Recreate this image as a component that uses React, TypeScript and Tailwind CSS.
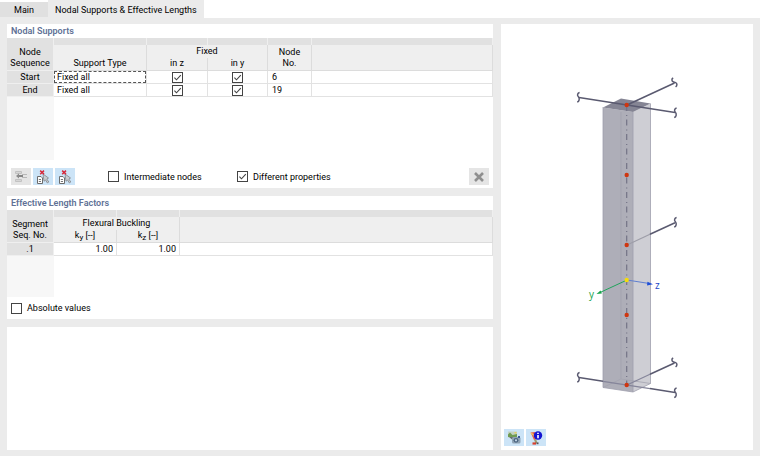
import { useState } from "react";
import type { ReactNode } from "react";

interface SupportRow {
  id: string;
  sequence: string;
  type: string;
  fixedZ: boolean;
  fixedY: boolean;
  node: number;
}

const SUPPORTS: SupportRow[] = [
  { id: "start", sequence: "Start", type: "Fixed all", fixedZ: true, fixedY: true, node: 6 },
  { id: "end", sequence: "End", type: "Fixed all", fixedZ: true, fixedY: true, node: 19 },
];

const MEMBER_NODES = [105, 175, 245, 315, 385];

const strip = "h-[7px] border-r border-[#efefef] bg-[#e1e1e1] p-0";
const head =
  "border-r border-b border-[#dcdcdc] bg-[#efefef] p-0 pb-px align-bottom font-normal leading-[11px]";
const rowHead =
  "border-r border-b border-[#efefef] bg-[#e1e1e1] p-0 font-normal leading-[11px]";
const cell = "border-r border-b border-[#e2e2e2] p-0";

function Checkbox({
  label,
  hideLabel,
  defaultChecked = false,
}: {
  label: string;
  hideLabel?: boolean;
  defaultChecked?: boolean;
}) {
  const [checked, setChecked] = useState(defaultChecked);

  return (
    <label className="inline-flex items-center gap-[5px] align-middle">
      <span className="grid">
        <input
          type="checkbox"
          aria-label={hideLabel ? label : undefined}
          checked={checked}
          onChange={(e) => setChecked(e.target.checked)}
          className="col-start-1 row-start-1 h-[11px] w-[11px] appearance-none border border-[#444] bg-white"
        />
        {checked ? (
          <svg
            viewBox="0 0 11 11"
            className="pointer-events-none col-start-1 row-start-1 h-[11px] w-[11px]"
          >
            <path d="M2.4 5.6 4.5 7.8 8.8 3.2" fill="none" stroke="#444" strokeWidth="1.1" />
          </svg>
        ) : null}
      </span>
      {hideLabel ? null : label}
    </label>
  );
}

function ToolButton({
  label,
  disabled,
  children,
}: {
  label: string;
  disabled?: boolean;
  children: ReactNode;
}) {
  return (
    <button
      type="button"
      aria-label={label}
      disabled={disabled}
      className={`flex h-[17px] w-5 items-center justify-center ${disabled ? "bg-[#e5e5e5]" : "bg-[#cce4f7]"}`}
    >
      {children}
    </button>
  );
}

function InsertRowIcon() {
  return (
    <svg viewBox="0 0 14 13" className="h-[13px] w-3.5" fill="none">
      <path d="M1.5 1.5h6v2h-6zM1.5 9.5h6v2h-6z" fill="#d6d6d6" stroke="#c2c2c2" />
      <path d="M8 4.5h5M8 7.5h5" stroke="#b8b8b8" />
      <path d="M3 6h6" stroke="#858585" strokeWidth="2" />
      <path d="M5 3.500 2 6l3 2.500z" fill="#8c8c8c" />
    </svg>
  );
}

function PickNodeIcon() {
  return (
    <svg viewBox="0 0 14 14" className="h-3.5 w-3.5" fill="none">
      <path d="M1.5 6.5H5L6.5 8v5.5h-5z" fill="#fff" stroke="#6c6c6c" />
      <path d="M2.8 9.5h2.2M2.8 11.5h2.2" stroke="#777" />
      <path d="M7 4 12.5 8 10.8 9 12.8 12 11.3 12.9 9.6 10 8 11.2z" fill="#c9ced2" stroke="#8a8f94" strokeWidth=".9" />
      <path d="M4.2.6 8 4.2M8 .6 4.2 4.2" stroke="#d6283a" strokeWidth="1.5" />
    </svg>
  );
}

function CloseIcon() {
  return (
    <svg viewBox="0 0 12 12" className="h-3 w-3" fill="none">
      <path d="M2 2l8 8M10 2 2 10" stroke="#8f8f8f" strokeWidth="2.6" />
    </svg>
  );
}

function SaveViewIcon() {
  return (
    <svg viewBox="0 0 14 13" className="h-[13px] w-3.5">
      <path d="M1 .5h9v6H1z" fill="#c3d3c4" />
      <path d="M1 3.5 3 1.5 5.500 4 10 3v3H1z" fill="#6f9a52" />
      <path d="M7.500 1h2v1.500h-2z" fill="#e8cf5c" />
      <path d="M2 6h6l-1 2.500H5z" fill="#666c70" />
      <rect x="5" y="6" width="8.500" height="6.500" rx="1.500" fill="#8fa3b5" />
      <path d="M11 5h2v2h-2z" fill="#3d5c94" />
      <circle cx="9" cy="9.300" r="2.400" fill="#4b6580" />
      <circle cx="9" cy="9.300" r="1.100" fill="#c4d8e8" />
    </svg>
  );
}

function MemberInfoIcon() {
  return (
    <svg viewBox="0 0 14 14" className="h-3.5 w-3.5">
      <path d="M1.500 1.500 6 1 7.500 8 5 9z" fill="#e4604c" />
      <path d="M2 2 6 5.500" stroke="#f3c060" strokeWidth="1.6" />
      <path d="M6 8.500 7.500 12" stroke="#9a9b70" strokeWidth="2" />
      <path d="M3.500 12.500h3.500" stroke="#d8402c" strokeWidth="2.2" />
      <path d="M7.500 12.300h2" stroke="#555" strokeWidth="1.8" />
      <circle cx="9" cy="4.500" r="4.200" fill="#1414d2" />
      <path d="M9 3.900v3.400M9 1.700v1.400" stroke="#fff" strokeWidth="1.6" />
    </svg>
  );
}

// Break symbol at the far end of a connected member
function Break({ x, y, tilted }: { x: number; y: number; tilted?: boolean }) {
  return (
    <path
      transform={`translate(${x} ${y})`}
      d={
        tilted
          ? "M-.8-5C-2.6-4.2-2.6-1.7-.4-1L1.6-.4C3.3.3 3.4 2.8 1.6 4"
          : "M1.6-5C-.4-4.6-1.2-2.2.4-.7 1.8.8 1.4 4-.8 4.5"
      }
    />
  );
}

function MemberView() {
  return (
    <svg
      viewBox="0 0 252 402"
      className="min-h-0 w-full flex-1"
      role="img"
      aria-label="Member preview"
    >
      <g transform="translate(-501 -24)" fill="none">
        <path d="M603 107.5 633 112V392l-30-4.5z" fill="#aeaeb8" />
        <path d="M633 112 650.5 103.5V383.5L633 392z" fill="#ceced4" />
        <path d="M621 112V379" stroke="#a3a3af" />
        <path d="M603 387.5 621 379 650.5 383.5" stroke="#a3a3b0" strokeWidth=".8" />
        <path d="M603 107V387.5L633 392V112M633 392l17.5-8.5V103.5" stroke="#a0a0ad" strokeWidth=".8" />
        <path d="M603 107.5 621 98.5 650.5 103.5 633 112z" fill="#858594" />
        <path
          d="M626.7 105V385"
          stroke="#737386"
          strokeWidth="1.2"
          strokeDasharray="6 4 1 3.5"
        />

        <g stroke="#5a5a70" strokeWidth="1.5">
          <path d="M579 97.5 675 112.5M627 105l47.5-22" />
          <path d="M627 245 650 234.3" stroke="#9d9da8" strokeWidth="1.2" />
          <path d="M650 234.3 675 222.8" />
          <path d="M579 377.5 603 381.3M650 388.6 675 392.5M650 374.3 674.5 363" />
          <path d="M603 381.3 650 388.6M627 385 650 374.3" stroke="#85859a" strokeWidth="1.2" />
          <Break x={578} y={97.5} />
          <Break x={674} y={83} tilted />
          <Break x={675} y={113} />
          <Break x={675} y={222.5} />
          <Break x={578} y={377.5} />
          <Break x={674} y={363} tilted />
          <Break x={675} y={393} />
        </g>

        <path d="M627 280 600 292.5" stroke="#21a35c" />
        <path d="M596.5 294l4-3.5 1.4 3z" fill="#16a34a" />
        <path d="M627 280 648 283.3" stroke="#5f7fd0" />
        <path d="M653 284.3l-5.5-2.5-.5 3.6z" fill="#1d4ed8" />
        <text x="589" y="298" fontSize="10" fill="#16a34a" className="font-['Open_Sans']">y</text>
        <text x="655" y="289" fontSize="10" fill="#1d48c8" className="font-['Open_Sans']">z</text>

        {MEMBER_NODES.map((y) => (
          <circle key={y} cx="626.7" cy={y} r="2.2" fill="#cf3610" />
        ))}
        <circle cx="626.7" cy="280" r="2.2" fill="#f5dc0a" />
      </g>
    </svg>
  );
}

function PanelTitle({ children }: { children: ReactNode }) {
  return (
    <h2 className="px-1 text-[9px] leading-[14px] font-semibold text-[#607196]">{children}</h2>
  );
}

function NodalSupports() {
  return (
    <section className="bg-white pb-[3px]">
      <PanelTitle>Nodal Supports</PanelTitle>
      <table className="w-full table-fixed border-separate border-spacing-0 text-center leading-[11px]">
        <colgroup>
          <col className="w-[47px]" />
          <col className="w-[93px]" />
          <col className="w-[61px]" />
          <col className="w-[60px]" />
          <col className="w-11" />
          <col />
        </colgroup>
        <thead>
          <tr>
            <td className={strip} />
            <td className={strip} />
            <td className={strip} />
            <td className={strip} />
            <td className={strip} />
            <td className={strip} />
          </tr>
          <tr className="h-[13px]">
            <th rowSpan={2} className={`${rowHead} pb-px align-bottom`}>
              Node
              <br />
              Sequence
            </th>
            <th rowSpan={2} className={head}>Support Type</th>
            <th colSpan={2} className="border-r border-[#dcdcdc] bg-[#efefef] p-0 font-normal">
              Fixed
            </th>
            <th rowSpan={2} className={head}>
              Node
              <br />
              No.
            </th>
            <th rowSpan={2} className={head} />
          </tr>
          <tr className="h-[13px]">
            <th className={head}>in z</th>
            <th className={head}>in y</th>
          </tr>
        </thead>
        <tbody>
          {SUPPORTS.map((row, i) => (
            <tr key={row.id} className="h-[13px]">
              <th className={rowHead}>{row.sequence}</th>
              <td className={`${cell} text-left`}>
                <div
                  className={`border border-dashed px-0.5 leading-[10px] ${i === 0 ? "border-[#555]" : "border-transparent"}`}
                >
                  {row.type}
                </div>
              </td>
              <td className={`${cell} leading-none`}>
                <Checkbox label={`${row.sequence} in z`} hideLabel defaultChecked={row.fixedZ} />
              </td>
              <td className={`${cell} leading-none`}>
                <Checkbox label={`${row.sequence} in y`} hideLabel defaultChecked={row.fixedY} />
              </td>
              <td className={`${cell} pl-1 text-left`}>{row.node}</td>
              <td className={cell} />
            </tr>
          ))}
          <tr className="h-[63px]">
            <td className="bg-[#f7f7f7]" />
            <td colSpan={5} />
          </tr>
        </tbody>
      </table>
      <div className="grid grid-cols-[97px_129px_1fr_auto] items-center px-1 pt-2">
        <div className="flex gap-0.5">
          <ToolButton label="Insert row" disabled>
            <InsertRowIcon />
          </ToolButton>
          <ToolButton label="Select start node">
            <PickNodeIcon />
          </ToolButton>
          <ToolButton label="Select end node">
            <PickNodeIcon />
          </ToolButton>
        </div>
        <Checkbox label="Intermediate nodes" />
        <Checkbox label="Different properties" defaultChecked />
        <ToolButton label="Delete" disabled>
          <CloseIcon />
        </ToolButton>
      </div>
    </section>
  );
}

function EffectiveLengths() {
  return (
    <section className="bg-white pb-1">
      <PanelTitle>Effective Length Factors</PanelTitle>
      <table className="w-full table-fixed border-separate border-spacing-0 text-center leading-[11px]">
        <colgroup>
          <col className="w-[47px]" />
          <col className="w-[63px]" />
          <col className="w-[63px]" />
          <col />
        </colgroup>
        <thead>
          <tr>
            <td className={strip} />
            <td className={strip} />
            <td className={strip} />
            <td className={strip} />
          </tr>
          <tr className="h-[13px]">
            <th rowSpan={2} className={`${rowHead} pb-px align-bottom`}>
              Segment
              <br />
              Seq. No.
            </th>
            <th colSpan={2} className="border-r border-[#dcdcdc] bg-[#efefef] p-0 font-normal">
              Flexural Buckling
            </th>
            <th rowSpan={2} className={head} />
          </tr>
          <tr className="h-[13px]">
            <th className={head}>
              k<sub className="text-[8px]">y</sub> [--]
            </th>
            <th className={head}>
              k<sub className="text-[8px]">z</sub> [--]
            </th>
          </tr>
        </thead>
        <tbody>
          <tr className="h-[13px]">
            <th className={rowHead}>.1</th>
            <td className={`${cell} pr-[3px] text-right`}>1.00</td>
            <td className={`${cell} pr-[3px] text-right`}>1.00</td>
            <td className={cell} />
          </tr>
          <tr className="h-[41px]">
            <td className="bg-[#f7f7f7]" />
            <td colSpan={3} />
          </tr>
        </tbody>
      </table>
      <div className="flex items-center px-1 pt-[5px] pb-px">
        <Checkbox label="Absolute values" />
      </div>
    </section>
  );
}

export default function App() {
  return (
    <div className="flex min-h-screen flex-col bg-[#ebebeb] font-['Roboto','Open_Sans',sans-serif] text-[9px] leading-3 text-black">
      <nav role="tablist" className="flex h-[18px] items-end bg-white">
        <button
          type="button"
          role="tab"
          aria-selected={false}
          className="h-4 w-12 border-b border-[#ebebeb] bg-[#e0e0e0]"
        >
          Main
        </button>
        <button type="button" role="tab" aria-selected className="h-full bg-[#ebebeb] px-[7px] pt-0.5">
          Nodal Supports &amp; Effective Lengths
        </button>
      </nav>
      <main className="grid flex-1 grid-cols-[minmax(0,1fr)_252px] gap-2 px-[7px] pt-1.5 pb-1.5">
        <div className="flex flex-col gap-2">
          <NodalSupports />
          <EffectiveLengths />
          <section className="flex-1 bg-white" />
        </div>
        <aside className="flex flex-col bg-white">
          <MemberView />
          <div className="flex gap-0.5 px-[3px] pt-[3px] pb-1">
            <ToolButton label="Save view">
              <SaveViewIcon />
            </ToolButton>
            <ToolButton label="Member information">
              <MemberInfoIcon />
            </ToolButton>
          </div>
        </aside>
      </main>
    </div>
  );
}
